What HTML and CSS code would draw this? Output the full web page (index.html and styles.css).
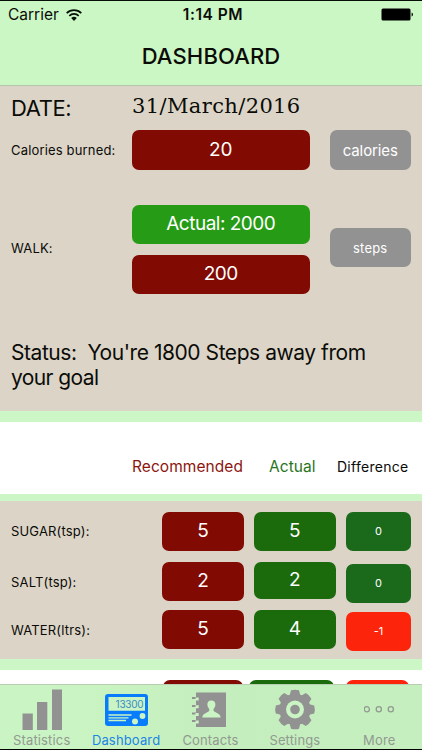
FILE: index.html
```html
<!DOCTYPE html>
<html lang="en">
<head>
<meta charset="utf-8">
<title>Dashboard</title>
<link rel="stylesheet" href="styles.css">
</head>
<body>
<div class="app">
  <header class="header">
    <div class="status-bar">
      <div class="carrier"><span>Carrier</span>
        <svg width="16" height="12" viewBox="0 0 16 12"><g fill="none" stroke="#061006" stroke-width="1.7"><path d="M.7 4.1a10.4 10.4 0 0 1 14.6 0"/><path d="M3.3 6.9a6.7 6.7 0 0 1 9.4 0"/></g><path d="M8 11.9 5.2 9.1a4 4 0 0 1 5.6 0z" fill="#061006"/></svg>
      </div>
      <div class="clock">1:14 PM</div>
      <svg class="battery" width="33" height="13" viewBox="0 0 33 13"><rect x=".5" y=".5" width="29" height="12" rx="1.5"/><path d="M30.6 4.5q1.4.4 1.4 2t-1.4 2z"/></svg>
    </div>
    <h1 class="title">DASHBOARD</h1>
  </header>
  <main class="content">
    <section class="today">
      <div class="row date-row"><span class="date-label">DATE:</span><span class="date">31/March/2016</span></div>
      <div class="row calorie-row"><span class="label calorie-label">Calories burned:</span><div class="pill red">20</div><div class="pill gray calories">calories</div></div>
      <div class="row walk-row"><span class="label walk-label">WALK:</span><div class="walk-values"><div class="pill green actual">Actual: 2000</div><div class="pill red">200</div></div><div class="pill gray steps">steps</div></div>
      <p class="goal"><span class="goal-first">Status:&nbsp; You're 1800 Steps away from</span><br><span class="goal-second">your goal</span></p>
    </section>
    <section class="columns"><span class="recommended">Recommended</span><span class="actual-head">Actual</span><span class="difference">Difference</span></section>
    <section class="intake">
      <div class="intake-row sugar"><span class="label">SUGAR(tsp):</span><div class="pill red">5</div><div class="pill dark">5</div><div class="pill diff">0</div></div>
      <div class="intake-row salt"><span class="label">SALT(tsp):</span><div class="pill red">2</div><div class="pill dark short">2</div><div class="pill diff">0</div></div>
      <div class="intake-row water"><span class="label">WATER(ltrs):</span><div class="pill red">5</div><div class="pill dark">4</div><div class="pill diff minus">-1</div></div>
    </section>
    <section class="next"><div class="peek red"></div><div class="peek dark"></div><div class="peek minus"></div></section>
  </main>
  <nav class="tabs">
    <div class="tab"><svg width="42" height="42" viewBox="0 0 42 42"><path d="M1.5 24.5h10.3V41H1.5zM16 13h10.3v28H16zM31 .5h10V41H31z"/></svg><span class="t1">Statistics</span></div>
    <div class="tab active"><svg width="44" height="42" viewBox="0 0 44 42"><rect x="0" y="5" width="43" height="32" rx="3"/><path class="screen" d="M3.5 8h36.5v13.8H3.5z"/><text x="10.6" y="19.2" textLength="28">13300</text><path class="lines" d="M3.5 26h23M3.5 28.8h20M3.5 31.5h17.5"/><circle class="screen" cx="37.5" cy="27" r="2.9"/><circle class="screen" cx="30" cy="32.6" r="3"/></svg><span class="t2">Dashboard</span></div>
    <div class="tab"><svg class="book" width="36" height="42" viewBox="0 0 36 42"><path d="M5 3.5h30V38H5V33H1v-2h4v-5.5H1v-2h4V18H1v-2h4v-6H1V8h4z"/><path class="notch" d="M4.5 8.5h3.2v3H4.5zM4.5 16.2h3.2v3H4.5zM4.5 24h3.2v3H4.5zM4.5 31.5h3.2v3H4.5z"/><path class="screen" d="M20.3 11.5c3 0 4.3 2 4.1 4.7-.2 2.4-2.2 3.3-2 5 .3 2.3 6.7 2.3 7.3 7.3H11.2c.6-5 7-5 7.2-7.3.2-1.7-1.8-2.6-2-5-.2-2.7 1-4.7 3.9-4.7z"/></svg><span class="t3">Contacts</span></div>
    <div class="tab"><svg width="42" height="42" viewBox="0 0 42 42"><g transform="translate(21 20.5)"><circle r="15.7"/><g id="pair"><path d="M-4-19.2q4-1.2 8 0l1.8 7H-5.8zM-4 19.2q4 1.2 8 0l1.8-7H-5.8z"/></g><use href="#pair" transform="rotate(45)"/><use href="#pair" transform="rotate(90)"/><use href="#pair" transform="rotate(135)"/><circle class="screen" r="9"/><circle r="4.8"/></g></svg><span class="t4">Settings</span></div>
    <div class="tab"><svg width="32" height="42" viewBox="0 0 32 42"><g class="dots"><circle cx="2.8" cy="20.2" r="2.6"/><circle cx="14.8" cy="20.2" r="2.6"/><circle cx="26.8" cy="20.2" r="2.6"/></g></svg><span class="t5">More</span></div>
  </nav>
</div>
</body>
</html>
```
FILE: styles.css
```css
* { box-sizing: border-box; }
body { margin: 0; }
.app {
  width: 422px; height: 750px; overflow: hidden;
  display: flex; flex-direction: column;
  border-top: 1px solid #061006; border-bottom: 1px solid #000;
  background: #cdf6c6; color: #0b0b08;
  font-family: Inter, "Liberation Sans", sans-serif;
}
.header { height: 85px; flex: none; background: #cbf7c5; border-bottom: 1px solid #b5c7aa; }
.status-bar { height: 27px; display: grid; grid-template-columns: 1fr auto 1fr; align-items: center; padding: 0 8px; }
.carrier { display: flex; align-items: center; gap: 7px; font-size: 15.5px; }
.clock { font-size: 15.5px; font-weight: 600; letter-spacing: .55px; padding-left: 4px; }
.battery { justify-self: end; fill: #000; }
.title { margin: 12px 0 0; text-align: center; font-size: 22px; line-height: 32px; font-weight: 550; letter-spacing: .15px; }
.content { height: 598px; flex: none; display: flex; flex-direction: column; overflow: hidden; }
.today { height: 325px; flex: none; background: #dcd5c7; padding: 0 11px; }
.row { display: grid; grid-template-columns: 101px 177.5px 81.5px; column-gap: 20px; align-items: center; }
.date-row { height: 44px; }
.date-label { font-size: 22px; letter-spacing: -.4px; }
.date { font-family: "DejaVu Serif", serif; font-size: 21px; line-height: 28px; margin-top: -4px; white-space: nowrap; letter-spacing: .38px; }
.calorie-row { height: 40px; }
.label { font-size: 13px; white-space: nowrap; letter-spacing: .17px; }
.pill { height: 39.5px; border-radius: 7px; display: flex; align-items: center; justify-content: center; color: #fff; font-size: 19px; padding-bottom: 1px; }
.red { background: #810a02; }
.green { background: #269b15; }
.dark { background: #1b6b0d; }
.gray { background: #929292; padding: 0; }
.actual { letter-spacing: -.5px; }
.walk-values .red { letter-spacing: -.5px; }
.calories { font-size: 15px; letter-spacing: -.1px; }
.steps { font-size: 13px; letter-spacing: .2px; margin-top: -3px; }
.walk-label { margin-top: -3px; }
.walk-row { margin-top: 34.5px; height: 89px; }
.walk-values { display: flex; flex-direction: column; gap: 11px; }
.walk-values .pill, .steps { height: 39px; }
.goal { margin: 46px 0 0; font-size: 21px; line-height: 25.3px; white-space: nowrap; letter-spacing: -.45px; }
.goal-second { letter-spacing: -.6px; }
.columns { margin-top: 11px; height: 72px; flex: none; background: #fff; display: flex; align-items: center; padding: 17px 13px 0 132px; font-size: 15.5px; }
.recommended { color: #8d1510; width: 137px; letter-spacing: .06px; }
.actual-head { color: #28751e; width: 68px; letter-spacing: .05px; }
.difference { font-size: 14px; letter-spacing: .27px; }
.intake { margin-top: 7px; height: 158px; flex: none; background: #dcd5c7; padding: 10.5px 11px 0; }
.intake-row { display: grid; grid-template-columns: 141.2px 81.5px 81.5px 65.5px; column-gap: 10.2px; height: 40px; }
.intake-row .label { align-self: center; margin-top: -1px; }
.salt { margin-top: 10px; }
.water { margin-top: 8px; }
.intake-row .diff { background: #1b6a1b; font-size: 11px; padding: 0; }
.intake-row .minus, .minus { background: #fc250c; }
.salt .diff { margin-top: 2px; height: 39px; }
.salt .short { height: 37px; }
.water .diff { margin-top: 2px; }
.next { margin-top: 10.5px; height: 16px; flex: none; background: #fff; display: flex; padding: 10.5px 0 0 163px; }
.peek { height: 40px; border-radius: 7px; width: 80px; margin-right: 6px; }
.peek.dark { width: 85px; margin-right: 12px; }
.peek.minus { width: 63px; margin: 0; }
.tabs { height: 65px; flex: none; display: grid; grid-template-columns: repeat(5, 1fr); background: linear-gradient(90deg, #caf4c4, #c9f4c2 25%, #c4eebd 50%, #c6efbf); border-top: 1px solid #b8cdb1; z-index: 1; }
.tab { display: flex; flex-direction: column; align-items: center; color: #929a91; font-size: 13px; line-height: 16px; padding-top: 4px; letter-spacing: .15px; }
.tab span { margin-top: 1px; margin-right: 1px; }
.tab svg { fill: #929292; }
.tab .book { margin-right: 3px; }
.tab .screen, .tab .notch { fill: #caf4c4; }
.tab.active { color: #1b85e4; }
.tab.active svg { fill: #087cfb; }
.tab text { font-size: 10px; fill: #3b8bc4; letter-spacing: 0; }
.lines { stroke: #caf4c4; stroke-width: 1.3; }
.tab .dots { fill: none; stroke: #929a91; stroke-width: 1.3; }
```
